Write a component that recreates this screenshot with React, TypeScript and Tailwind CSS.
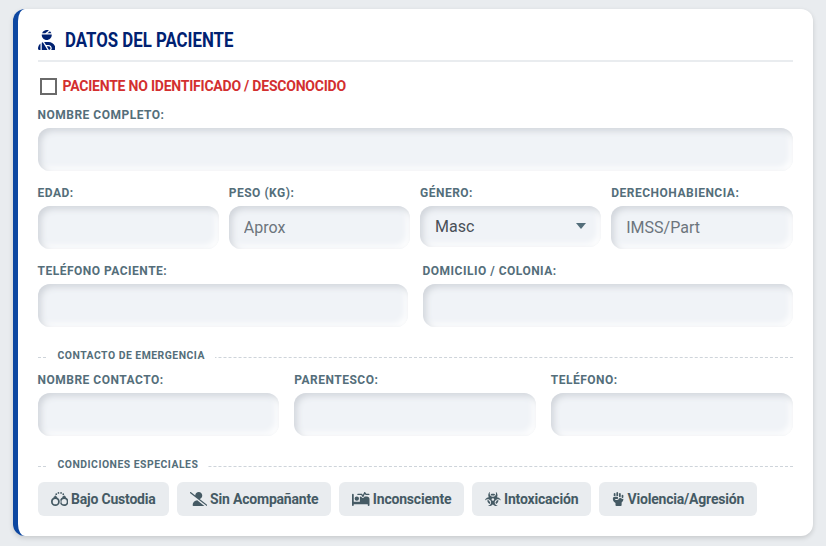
import { FaUserInjured, FaHandcuffs, FaUserSlash, FaBedPulse, FaBiohazard, FaHandFist } from "react-icons/fa6";

const inputCls =
  "w-full h-[43px] rounded-[12px] bg-[#f0f3f7] px-[15px] text-[16px] text-[#495057] placeholder:text-[#6c757d] outline-none shadow-[inset_3px_3px_6px_#d1d5db,inset_-3px_-3px_6px_#ffffff]";
const labelCls = "block h-[14px] mb-[6px] text-[12px] leading-[14px] font-bold tracking-[0.5px] text-[#546e7a]";

function Field({ label, placeholder }: { label: string; placeholder?: string }) {
  return (
    <div className="min-w-0">
      <label className={labelCls}>{label}</label>
      <input className={inputCls} placeholder={placeholder} />
    </div>
  );
}

function Section({ title }: { title: string }) {
  return (
    <div className="relative h-[14px]">
      <div className="absolute left-0 right-0 top-[8px] border-t border-dashed border-[#ced4da]" />
      <span className="relative ml-[10px] block w-fit bg-white px-[10px] text-[10.4px] leading-[14px] font-bold tracking-[0.5px] text-[#546e7a]">{title}</span>
    </div>
  );
}

const chips = [
  { icon: FaHandcuffs, label: "Bajo Custodia", w: "w-[17.5px]" },
  { icon: FaUserSlash, label: "Sin Acompañante", w: "w-[17.5px]" },
  { icon: FaBedPulse, label: "Inconsciente", w: "w-[17.5px]" },
  { icon: FaBiohazard, label: "Intoxicación", w: "w-[15.75px]" },
  { icon: FaHandFist, label: "Violencia/Agresión", w: "w-[12.25px]" },
];

export default function App() {
  return (
    <div className="h-[546px] overflow-hidden bg-[#e9ecef] px-[13px] pt-[9px] font-['Roboto',sans-serif]">
      <div className="h-[527px] rounded-[12px] border-l-[5px] border-[#0d47a1] bg-white pl-[19.5px] pr-[20.5px] shadow-[0_2px_5px_rgba(0,0,0,0.15)]">
        <div className="flex items-center h-[53px] border-b-2 border-[#e9ecef] pt-[10px]">
          <FaUserInjured className="h-[20px] w-[17.5px] shrink-0 text-[#002171]" />
          <h2 className="ml-[9.5px] text-[20px] font-bold text-[#002171] whitespace-nowrap origin-left scale-x-[0.84]">DATOS DEL PACIENTE</h2>
        </div>
        <div className="flex items-center h-[18px] mt-[15px] ml-[2px]">
          <span className="block w-[17px] h-[17px] border-2 border-[#6a6a6a] bg-white" />
          <span className="ml-[6px] text-[14px] tracking-[-0.22px] font-bold text-[#d32f2f]">PACIENTE NO IDENTIFICADO / DESCONOCIDO</span>
        </div>
        <div className="mt-[13px]"><Field label="NOMBRE COMPLETO:" /></div>
        <div className="grid grid-cols-4 gap-x-[10px] mt-[15px]">
          <Field label="EDAD:" />
          <Field label="PESO (KG):" placeholder="Aprox" />
          <div className="min-w-0">
            <label className={labelCls}>GÉNERO:</label>
            <div className="relative flex items-center h-[41px] rounded-[12px] bg-[#f0f3f7] px-[15px] text-[16px] text-[#495057] shadow-[inset_3px_3px_6px_#d1d5db,inset_-3px_-3px_6px_#ffffff]">
              Masc
              <svg className="absolute right-[15px] top-[17px]" width="10" height="6" viewBox="0 0 10 6"><path d="M0 0h10L5 6z" fill="#546e7a" /></svg>
            </div>
          </div>
          <Field label="DERECHOHABIENCIA:" placeholder="IMSS/Part" />
        </div>
        <div className="grid grid-cols-2 gap-x-[15px] mt-[15px]">
          <Field label="TELÉFONO PACIENTE:" />
          <Field label="DOMICILIO / COLONIA:" />
        </div>
        <div className="mt-[22px]"><Section title="CONTACTO DE EMERGENCIA" /></div>
        <div className="grid grid-cols-3 gap-x-[15px] mt-[10px]">
          <Field label="NOMBRE CONTACTO:" />
          <Field label="PARENTESCO:" />
          <Field label="TELÉFONO:" />
        </div>
        <div className="mt-[22px]"><Section title="CONDICIONES ESPECIALES" /></div>
        <div className="flex gap-[8px] mt-[10px]">
          {chips.map(({ icon: Icon, label, w }) => (
            <div key={label} className="flex items-center h-[34px] rounded-[6px] bg-[#e9ecef] px-[13px] text-[14px] tracking-[-0.2px] font-bold text-[#455a64] whitespace-nowrap">
              <Icon className={`h-[14px] mr-[3px] shrink-0 ${w}`} />
              {label}
            </div>
          ))}
        </div>
      </div>
    </div>
  );
}
